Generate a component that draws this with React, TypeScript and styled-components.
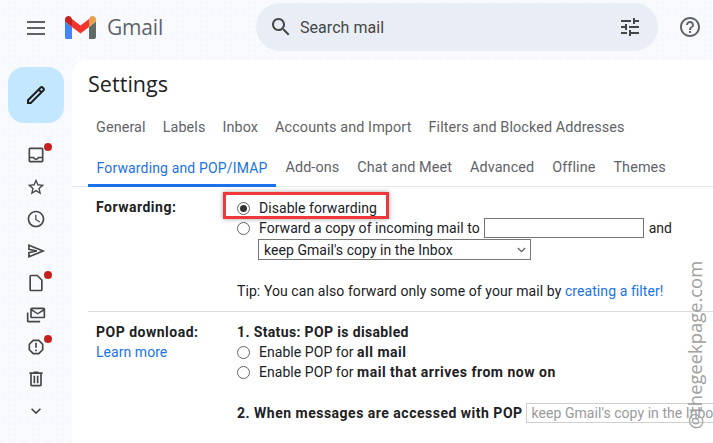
import styled, { createGlobalStyle } from "styled-components";

const GlobalStyle = createGlobalStyle`
  html, body {
    margin: 0;
    padding: 0;
    width: 713px;
    height: 443px;
    overflow: hidden;
    background: #f8fafd;
  }
  * {
    box-sizing: border-box;
  }
`;

const Page = styled.div`
  position: relative;
  width: 713px;
  height: 443px;
  overflow: hidden;
  font-family: Roboto, "Liberation Sans", sans-serif;
  font-size: 14px;
  letter-spacing: 0.05px;
  color: #202124;
  background-color: #f8fafd;
  background-image: radial-gradient(#f0f2f8 0.6px, transparent 0.8px);
  background-size: 6px 6px;
  b {
    letter-spacing: 0.5px;
  }
`;

const TopBar = styled.header`
  height: 60px;
  display: flex;
  align-items: flex-start;
`;

const Burger = styled.div`
  width: 18px;
  margin: 21px 0 0 27px;
  display: flex;
  flex-direction: column;
  gap: 4px;
  span {
    height: 2px;
    background: #5f6368;
  }
`;

const Logo = styled.svg`
  width: 31px;
  height: 23px;
  margin: 16px 0 0 20px;
`;

const Brand = styled.div`
  margin: 11px 0 0 11px;
  width: 149px;
  font-family: "Open Sans", Roboto, sans-serif;
  font-size: 21px;
  line-height: 32px;
  color: #5f6368;
  letter-spacing: -0.2px;
`;

const Search = styled.div`
  width: 402px;
  height: 48px;
  margin-top: 3px;
  padding: 0 16px 0 13px;
  display: flex;
  align-items: center;
  background: #e9eef6;
  border-radius: 24px;
  color: #444746;
  font-size: 16px;
`;

const SearchText = styled.span`
  flex: 1;
  margin-left: 7px;
`;

const HelpIcon = styled.svg`
  width: 24px;
  height: 24px;
  margin: 15px 0 0 20px;
`;

const Body = styled.div`
  display: flex;
  align-items: flex-start;
`;

const Rail = styled.nav`
  width: 72px;
  flex: none;
  display: flex;
  flex-direction: column;
  align-items: center;
`;

const Compose = styled.div`
  width: 56px;
  height: 56px;
  margin-top: 7px;
  border-radius: 16px;
  background: #c2e7ff;
  display: flex;
  align-items: center;
  justify-content: center;
`;

const RailList = styled.div`
  margin-top: 22px;
  display: flex;
  flex-direction: column;
  gap: 12px;
`;

const RailItem = styled.div<{ $dot?: boolean }>`
  position: relative;
  width: 20px;
  height: 20px;
  &::after {
    content: "";
    display: ${(p) => (p.$dot ? "block" : "none")};
    position: absolute;
    top: -2px;
    right: -6px;
    width: 8px;
    height: 8px;
    border-radius: 50%;
    background: #c5221f;
  }
  svg {
    display: block;
  }
`;

const Panel = styled.main`
  flex: 1;
  height: 383px;
  background: #fff;
  border-top-left-radius: 16px;
  overflow: hidden;
`;

const Title = styled.h1`
  margin: 0;
  padding: 9px 0 0 16px;
  height: 42px;
  font-family: "Open Sans", Roboto, sans-serif;
  font-size: 21.5px;
  font-weight: 400;
  line-height: 30px;
  color: #202124;
`;

const TabRow = styled.div`
  display: flex;
  padding: 6px 0 0 15.5px;
  height: 50px;
  align-items: center;
  white-space: nowrap;
`;

const TabRowLast = styled.div`
  display: flex;
  gap: 1px;
  padding-left: 16px;
  height: 35px;
  border-bottom: 1px solid #e6eaf0;
  white-space: nowrap;
`;

const Tab = styled.div<{ $active?: boolean }>`
  padding: 0 8.5px 1px;
  font-size: ${(p) => (p.$active ? "14px" : "14.4px")};
  line-height: 16px;
  letter-spacing: ${(p) => (p.$active ? "0.15px" : "0.1px")};
  color: ${(p) => (p.$active ? "#1a73e8" : "#5f6368")};
  display: flex;
  align-items: center;
  flex: none;
  height: 35px;
  border-bottom: 3px solid ${(p) => (p.$active ? "#1a73e8" : "transparent")};
`;

const Section = styled.section`
  display: grid;
  grid-template-columns: 141px 1fr;
  margin-left: 16px;
  padding: 11px 0 0 8px;
  white-space: nowrap;
`;

const ForwardSection = styled(Section)`
  height: 125px;
  border-bottom: 1px solid #dcdcdc;
`;

const RowLabel = styled.div`
  font-weight: 700;
  letter-spacing: 0.5px;
  line-height: 18px;
`;

const SideLink = styled.a`
  display: block;
  margin-top: 2px;
  line-height: 18px;
  color: #1a73e8;
`;

const Options = styled.div`
  display: flex;
  flex-direction: column;
`;

const OptionRow = styled.div`
  display: flex;
  align-items: center;
  height: 20px;
`;

const Radio = styled.span<{ $checked?: boolean }>`
  width: 13px;
  height: 13px;
  margin-right: 9px;
  flex: none;
  border-radius: 50%;
  border: 1px solid #5f6368;
  display: flex;
  align-items: center;
  justify-content: center;
  &::after {
    content: "";
    display: ${(p) => (p.$checked ? "block" : "none")};
    width: 7px;
    height: 7px;
    border-radius: 50%;
    background: #333;
  }
`;

const TextInput = styled.div`
  width: 160px;
  height: 20px;
  margin: 0 5px 0 4px;
  border: 1px solid #767676;
`;

const SelectBox = styled.div`
  width: 273px;
  height: 21px;
  margin: 1px 0 0 21px;
  padding: 0 4px 0 5px;
  border: 1px solid #767676;
  display: flex;
  align-items: center;
  justify-content: space-between;
`;

const TipLine = styled.div`
  margin-top: 22px;
  line-height: 18px;
  letter-spacing: 0.08px;
  a {
    color: #1a73e8;
  }
`;

const Strong = styled.div`
  font-weight: 700;
  letter-spacing: 0.36px;
  line-height: 18px;
  margin-bottom: 1px;
`;

const WhenRow = styled.div`
  display: flex;
  align-items: center;
  margin-top: 21px;
  font-weight: 700;
  letter-spacing: 0.5px;
`;

const GhostSelect = styled.div`
  width: 240px;
  height: 20px;
  margin-left: 3px;
  padding-left: 5px;
  flex: none;
  border: 1px solid #cfcfcf;
  color: #9a9a9a;
  font-weight: 400;
  letter-spacing: 0.05px;
  line-height: 18px;
`;

const Highlight = styled.div`
  position: absolute;
  left: 223px;
  top: 192px;
  width: 166px;
  height: 27px;
  border: 3px solid #f0383c;
  box-shadow: 0 0 5px rgba(0, 0, 0, 0.35);
`;

const Watermark = styled.div`
  position: absolute;
  left: 694px;
  top: 345px;
  transform: translate(-50%, -50%) rotate(-90deg);
  font-family: "Open Sans", sans-serif;
  font-size: 18.3px;
  color: #a0a0a0;
  white-space: nowrap;
`;

const icon = "#444746";

const Ico = ({ d, size = 20, line }: { d: string; size?: number; line?: boolean }) => (
  <svg
    width={size}
    height={size}
    viewBox="0 0 24 24"
    fill={line ? "none" : icon}
    stroke={line ? icon : "none"}
    strokeWidth={line ? 2 : 0}
  >
    <path d={d} />
  </svg>
);

const railIcons: { d: string; dot?: boolean; line?: boolean }[] = [
  { dot: true, d: "M19 3H5c-1.1 0-2 .9-2 2v14c0 1.1.9 2 2 2h14c1.1 0 2-.9 2-2V5c0-1.1-.9-2-2-2zm0 16H5v-3h3.56c.69 1.19 1.97 2 3.45 2s2.75-.81 3.44-2H19v3zm0-5h-4.99c0 1.1-.9 2-2 2s-2-.9-2-2H5V5h14v9z" },
  { d: "M22 9.24l-7.19-.62L12 2 9.19 8.63 2 9.24l5.46 4.73L5.82 21 12 17.27 18.18 21l-1.63-7.03L22 9.24zM12 15.4l-3.76 2.27 1-4.28-3.32-2.88 4.38-.38L12 6.1l1.71 4.04 4.38.38-3.32 2.88 1 4.28L12 15.4z" },
  { d: "M11.99 2C6.47 2 2 6.48 2 12s4.47 10 9.99 10C17.52 22 22 17.52 22 12S17.52 2 11.99 2zM12 20c-4.42 0-8-3.58-8-8s3.58-8 8-8 8 3.58 8 8-3.58 8-8 8zm.5-13H11v6l5.25 3.15.75-1.23-4.5-2.67z" },
  { line: true, d: "M3.500 5 20.500 12 3.500 19V14L13 12 3.500 10z" },
  { dot: true, d: "M6 2c-1.1 0-2 .9-2 2v16c0 1.1.9 2 2 2h12c1.1 0 2-.9 2-2V8l-6-6H6zm0 2h7.17L18 8.83V20H6V4z" },
  { d: "M21 3H7c-1.1 0-2 .9-2 2v9c0 1.1.9 2 2 2h14c1.1 0 2-.9 2-2V5c0-1.1-.9-2-2-2zm0 11H7V7.2l7 4.3 7-4.3V14zm-7-4.5L7.4 5h13.2L14 9.5zM3 19h14v2H3c-1.1 0-2-.9-2-2V9h2v10z" },
  { dot: true, d: "M15.73 3H8.27L3 8.27v7.46L8.27 21h7.46L21 15.73V8.27L15.73 3zM19 14.9L14.9 19H9.1L5 14.9V9.1L9.1 5h5.8L19 9.1v5.8zM11 7h2v6h-2zm0 8h2v2h-2z" },
  { d: "M15 4V3H9v1H4v2h1v13c0 1.1.9 2 2 2h10c1.1 0 2-.9 2-2V6h1V4h-5zm2 15H7V6h10v13zM9 8h2v9H9zm4 0h2v9h-2z" },
  { d: "M7.41 8.59 12 13.17l4.59-4.58L18 10l-6 6-6-6z" },
];

const Chevron = ({ color = "#5f6368" }: { color?: string }) => (
  <svg width="9" height="6" viewBox="0 0 11 7" fill="none" stroke={color} strokeWidth="1.6">
    <path d="M1 1l4.5 4.5L10 1" />
  </svg>
);

export default function App() {
  return (
    <Page>
      <GlobalStyle />
      <TopBar>
        <Burger>
          <span />
          <span />
          <span />
        </Burger>
        <Logo viewBox="0 0 31 23">
          <path fill="#4285f4" d="M1 23h6V11L0 5.5V21c0 1.1.9 2 1 2z" />
          <path fill="#5f6b63" d="M24 23h5c1 0 2-1 2-2V5.500L24 11z" />
          <path fill="#e8a04c" d="M24 3v8l7-5.500V3.500C31 .5 27.500-1 25.200.8z" />
          <path fill="#f4342f" d="M7 11V3l8.500 6.500L24 3v8l-8.500 6.500z" />
          <path fill="#c5221f" d="M0 3.500v2L7 11V3L5.800.8C3.500-1 0 .5 0 3.500z" />
        </Logo>
        <Brand>Gmail</Brand>
        <Search>
          <Ico size={24} d="M15.5 14h-.79l-.28-.27C15.410 12.590 16 11.110 16 9.500 16 5.910 13.090 3 9.500 3S3 5.910 3 9.500 5.910 16 9.500 16c1.610 0 3.090-.59 4.230-1.570l.27.28v.79l5 4.990L20.490 19l-4.990-5zm-6 0C7.010 14 5 11.990 5 9.500S7.010 5 9.500 5 14 7.010 14 9.500 11.990 14 9.500 14z" />
          <SearchText>Search mail</SearchText>
          <Ico size={24} d="M3 17v2h6v-2H3zM3 5v2h10V5H3zm10 16v-2h8v-2h-8v-2h-2v6h2zM7 9v2H3v2h4v2h2V9H7zm14 4v-2H11v2h10zm-6-4h2V7h4V5h-4V3h-2v6z" />
        </Search>
        <HelpIcon viewBox="0 0 24 24" fill="#5f6368">
          <path d="M11 18h2v-2h-2v2zm1-16C6.480 2 2 6.480 2 12s4.480 10 10 10 10-4.480 10-10S17.520 2 12 2zm0 18c-4.410 0-8-3.590-8-8s3.590-8 8-8 8 3.590 8 8-3.590 8-8 8zm0-14c-2.210 0-4 1.790-4 4h2c0-1.100.9-2 2-2s2 .9 2 2c0 2-3 1.750-3 5h2c0-2.250 3-2.500 3-5 0-2.210-1.790-4-4-4z" />
        </HelpIcon>
      </TopBar>
      <Body>
        <Rail>
          <Compose>
            <svg width="24" height="24" viewBox="0 0 24 24" fill="#1f1f1f">
              <path d="M20.410 4.940l-1.350-1.350c-.78-.78-2.050-.78-2.830 0L3 16.820V21h4.180L20.410 7.770c.79-.78.79-2.050 0-2.830zM6.350 19H5v-1.350l9.660-9.660 1.350 1.350L6.350 19zM17.420 7.930l-1.350-1.350 1.580-1.580 1.350 1.350-1.580 1.580z" />
            </svg>
          </Compose>
          <RailList>
            {railIcons.map((item) => (
              <RailItem key={item.d} $dot={item.dot}>
                <Ico d={item.d} line={item.line} />
              </RailItem>
            ))}
          </RailList>
        </Rail>
        <Panel>
          <Title>Settings</Title>
          <TabRow>
            <Tab>General</Tab>
            <Tab>Labels</Tab>
            <Tab>Inbox</Tab>
            <Tab>Accounts and Import</Tab>
            <Tab>Filters and Blocked Addresses</Tab>
          </TabRow>
          <TabRowLast>
            <Tab $active>Forwarding and POP/IMAP</Tab>
            <Tab>Add-ons</Tab>
            <Tab>Chat and Meet</Tab>
            <Tab>Advanced</Tab>
            <Tab>Offline</Tab>
            <Tab>Themes</Tab>
          </TabRowLast>
          <ForwardSection>
            <RowLabel>Forwarding:</RowLabel>
            <Options>
              <OptionRow>
                <Radio $checked />
                Disable forwarding
              </OptionRow>
              <OptionRow>
                <Radio />
                Forward a copy of incoming mail to
                <TextInput />
                and
              </OptionRow>
              <SelectBox>
                keep Gmail's copy in the Inbox
                <Chevron />
              </SelectBox>
              <TipLine>
                Tip: You can also forward only some of your mail by <a>creating a filter!</a>
              </TipLine>
            </Options>
          </ForwardSection>
          <Section>
            <div>
              <RowLabel>POP download:</RowLabel>
              <SideLink>Learn more</SideLink>
            </div>
            <Options>
              <Strong>1. Status: POP is disabled</Strong>
              <OptionRow>
                <Radio />
                <span>
                  Enable POP for <b>all mail</b>
                </span>
              </OptionRow>
              <OptionRow>
                <Radio />
                <span>
                  Enable POP for <b>mail that arrives from now on</b>
                </span>
              </OptionRow>
              <WhenRow>
                2. When messages are accessed with POP
                <GhostSelect>keep Gmail's copy in the Inbox</GhostSelect>
              </WhenRow>
            </Options>
          </Section>
        </Panel>
      </Body>
      <Highlight />
      <Watermark>@thegeekpage.com</Watermark>
    </Page>
  );
}
